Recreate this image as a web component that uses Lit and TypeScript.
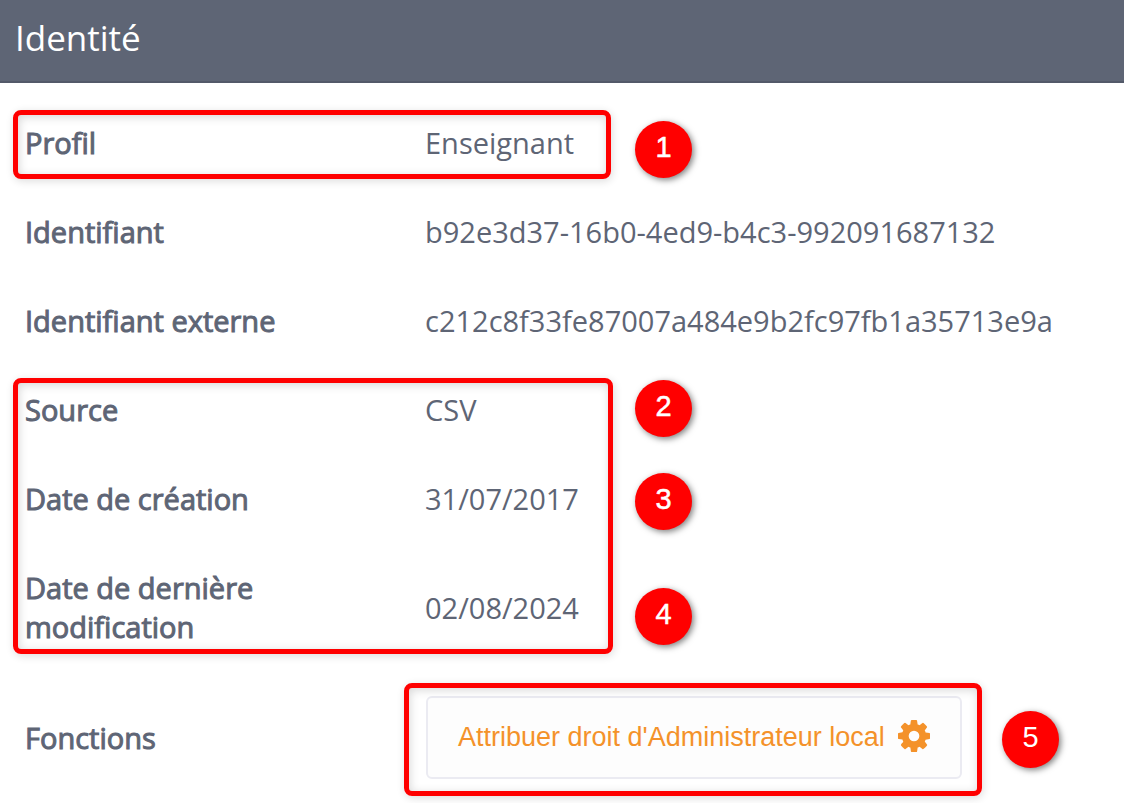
import { LitElement, html, css } from "lit";
import { customElement } from "lit/decorators.js";

@customElement("app-root")
export class AppRoot extends LitElement {
  static styles = css`
    :host {
      display: block;
      background: #fff;
      color: #5e6575;
      font: 29px/39px "Open Sans", "Noto Sans", sans-serif;
    }
    .head {
      background: #5e6575;
      border-bottom: 2px solid #535969;
      color: #fff;
      padding: 13px 15px 19px;
    }
    .title {
      margin: 0;
      font-size: 35px;
      font-weight: 400;
      line-height: 49px;
    }
    .body {
      position: relative;
      padding-top: 15px;
    }
    .list {
      margin: 0;
    }
    .row {
      display: grid;
      grid-template-columns: 300px 1fr;
      column-gap: 100px;
      align-items: center;
      padding: 25px;
    }
    .row:last-child {
      padding-bottom: 24px;
    }
    .label {
      -webkit-text-stroke: 1px currentColor;
    }
    .value {
      margin: 0;
    }
    .action {
      display: flex;
      align-items: center;
      gap: 13px;
      margin: 0 1px;
      padding: 20px 30px;
      border: 2px solid #ebebf2;
      border-radius: 6px;
      background: #fdfdfd;
      color: #f4922a;
      font: 27px/39px "Liberation Sans", Arial, sans-serif;
      cursor: pointer;
    }
    .gear {
      width: 32px;
      height: 32px;
      margin-bottom: 4px;
      fill: currentColor;
    }
    .frame {
      position: absolute;
      box-sizing: border-box;
      border: 5px solid #f00;
      border-radius: 8px;
      box-shadow: 1px 2px 8px rgba(0, 0, 0, 0.14), inset 1px 2px 10px rgba(0, 0, 0, 0.16);
      pointer-events: none;
    }
    .badge {
      position: absolute;
      width: 57px;
      height: 57px;
      border-radius: 50%;
      background: #f00;
      box-shadow: 2px 2px 6px rgba(0, 0, 0, 0.5);
      color: #fff;
      font: 29px/53px "Liberation Sans", Arial, sans-serif;
      text-align: center;
    }
    .frame-profile {
      left: 13px;
      top: 27px;
      width: 598px;
      height: 69px;
    }
    .frame-source {
      left: 13px;
      top: 295px;
      width: 600px;
      height: 276px;
    }
    .frame-action {
      left: 404px;
      top: 600px;
      width: 578px;
      height: 113px;
    }
    .b1, .b2, .b3, .b4 {
      left: 635px;
      -webkit-text-stroke: 0.5px currentColor;
    }
    .b1 { top: 38px; }
    .b2 { top: 297px; }
    .b3 { top: 390px; }
    .b4 { top: 505px; }
    .b5 { left: 1002px; top: 628px; }
  `;

  private rows = [
    ["Profil", "Enseignant"],
    ["Identifiant", "b92e3d37-16b0-4ed9-b4c3-992091687132"],
    ["Identifiant externe", "c212c8f33fe87007a484e9b2fc97fb1a35713e9a"],
    ["Source", "CSV"],
    ["Date de création", "31/07/2017"],
    ["Date de dernière modification", "02/08/2024"],
  ];

  render() {
    return html`
      <header class="head"><h1 class="title">Identité</h1></header>
      <main class="body">
        <dl class="list">
          ${this.rows.map(
            ([label, value]) => html`<div class="row">
              <dt class="label">${label}</dt>
              <dd class="value">${value}</dd>
            </div>`
          )}
          <div class="row">
            <dt class="label">Fonctions</dt>
            <dd class="value">
              <button class="action" type="button">
                Attribuer droit d'Administrateur local
                <svg class="gear" viewBox="128 128 1536 1536" aria-hidden="true">
                  <path d="M1152 896q0-106-75-181t-181-75-181 75-75 181 75 181 181 75 181-75 75-181zm512-109v222q0 12-8 23t-20 13l-185 28q-19 54-39 91 35 50 107 138 10 12 10 25t-9 23q-27 37-99 108t-94 71q-12 0-26-9l-138-108q-44 23-91 38-16 136-29 186-7 28-36 28h-222q-14 0-24.5-8.5t-11.5-21.5l-28-184q-49-16-90-37l-141 107q-10 9-25 9-14 0-25-11-126-114-165-168-7-10-7-23 0-12 8-23 15-21 51-66.5t54-70.5q-27-50-41-99l-183-27q-13-2-21-12.5t-8-23.5v-222q0-12 8-23t19-13l186-28q14-46 39-92-40-57-107-138-10-12-10-24 0-10 9-23 26-36 98.5-107.5t94.5-71.5q13 0 26 10l138 107q44-23 91-38 16-136 29-186 7-28 36-28h222q14 0 24.5 8.5t11.5 21.5l28 184q49 16 90 37l142-107q9-9 24-9 13 0 25 10 129 119 165 170 7 8 7 22 0 12-8 23-15 21-51 66.5t-54 70.5q26 50 41 98l183 28q13 2 21 12.5t8 23.5z" />
                </svg>
              </button>
            </dd>
          </div>
        </dl>
        <div class="frame frame-profile"></div>
        <div class="frame frame-source"></div>
        <div class="frame frame-action"></div>
        ${[1, 2, 3, 4, 5].map((n) => html`<span class="badge b${n}">${n}</span>`)}
      </main>
    `;
  }
}
